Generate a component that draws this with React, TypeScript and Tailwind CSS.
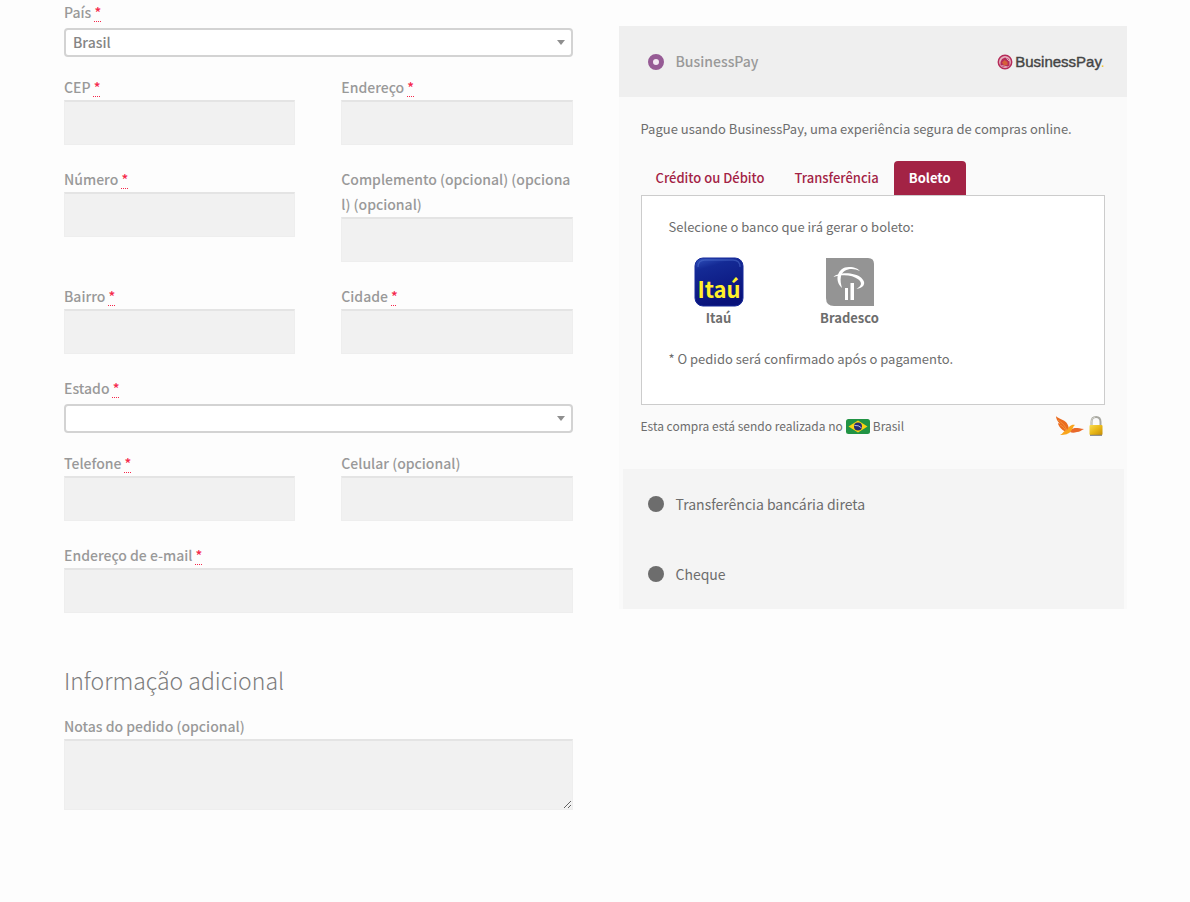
import type { ReactNode } from "react";

function Required() {
  return (
    <span className="text-[#f5284b] underline decoration-[#f5284b] decoration-dotted decoration-1 underline-offset-3">
      *
    </span>
  );
}

type FieldProps = { id: string; label: string; required?: boolean };

function Label({ id, label, required }: FieldProps) {
  return (
    <label htmlFor={id} className="block pr-0.5 text-[14px] leading-[25px] font-medium break-all text-[#999999]">
      {label} {required && <Required />}
    </label>
  );
}

function TextField(props: FieldProps) {
  return (
    <div className="mb-[22px]">
      <Label {...props} />
      <input
        id={props.id}
        type="text"
        required={props.required}
        className="block h-[45px] w-full border border-[#eeeeee] border-t-2 border-t-[#e4e4e4] bg-[#f1f1f1] px-3 text-[14px] text-[#929292] outline-none"
      />
    </div>
  );
}

function SelectField({ options, ...props }: FieldProps & { options: string[] }) {
  return (
    <div className="mb-[18px]">
      <Label {...props} />
      <div className="relative mt-[3px]">
        <select
          id={props.id}
          className="block h-[29px] w-full appearance-none rounded-[4px] border-2 border-[#d3d3d3] bg-white pr-6 pl-[7px] text-[14px] leading-[25px] font-medium text-[#858585] outline-none"
        >
          {options.map((o) => (
            <option key={o}>{o}</option>
          ))}
        </select>
        <svg viewBox="0 0 8 5" className="pointer-events-none absolute top-3 right-2 h-[5px] w-2" aria-hidden="true">
          <path d="M0 0h8L4 5z" fill="#8f8f8f" />
        </svg>
      </div>
    </div>
  );
}

function Row({ children }: { children: ReactNode }) {
  return <div className="grid grid-cols-2 gap-x-[46px]">{children}</div>;
}

function PayLogo() {
  return (
    <span className="flex items-center gap-0.5" role="img" aria-label="BusinessPay">
      <svg viewBox="0 0 16 16" className="h-4 w-4">
        <circle cx="8" cy="8" r="6.7" fill="#e6b3c0" stroke="#b62b59" strokeWidth="1.5" />
        <path d="M3.500 8 5 5l3-1.500L11.500 5l1 3v3.500L9.500 13H6l-2.500-2z" fill="#b62b59" />
        <path d="M5 8.500 7.500 6l3 2v3L7 11.500z" fill="#d5603a" />
        <path d="m4.500 11.500 5.500 1.300M9.500 4.500 12 7" stroke="#e8c7d0" strokeWidth=".8" />
      </svg>
      <span className="font-['Liberation_Sans',sans-serif] text-[15px] leading-5">
        <span className="text-[#444444] [-webkit-text-stroke:0.4px_#444444]">BusinessPay</span>
        <span className="text-[#f3c62c]">.</span>
      </span>
    </span>
  );
}

function ItauLogo() {
  return (
    <svg viewBox="0 0 50 50" className="h-[50px] w-[50px]" aria-hidden="true">
      <defs>
        <linearGradient id="itau" x1="0" y1="0" x2=".3" y2="1">
          <stop offset="0" stopColor="#3153bd" />
          <stop offset=".25" stopColor="#142a95" />
          <stop offset="1" stopColor="#09127a" />
        </linearGradient>
      </defs>
      <rect x="1" y="1" width="48" height="48" rx="8" fill="url(#itau)" stroke="#16299a" />
      <path d="M4 10q0-7 7-7h28q7 0 7 7" fill="none" stroke="#4f70cd" strokeWidth="1.300" opacity=".5" />
      <text x="25" y="41" textAnchor="middle" fontFamily="Noto Sans CJK SC, sans-serif" fontWeight="700" fontSize="22" fill="#fff02a">
        Itaú
      </text>
    </svg>
  );
}

function BradescoLogo() {
  return (
    <svg viewBox="0 0 50 50" className="h-[50px] w-[50px]" aria-hidden="true">
      <path d="M1 1h42q6 0 6 6v42H9q-8 0-8-8z" fill="#949494" />
      <path d="M8.500 20c5-5 21-5 28 1 6 6 1 10-5 11 5-3 6-6 2-9.500-6-5-17-5.500-25-2.500z" fill="#fff" />
      <path d="M17 31C9 24 12 10 24 10c6 0 9 2 11 4-8-4-17-2-19 5-1 5 0 8 1 12z" fill="#fff" />
      <path d="M20 31h3v12h-3zM25.500 26H29v17h-3.500z" fill="#fff" />
    </svg>
  );
}

function BrazilFlag() {
  return (
    <svg viewBox="0 0 24 15" className="mx-[3px] inline-block h-[15px] w-6 align-[-3px]" aria-hidden="true">
      <rect width="24" height="15" rx="2.500" fill="#219344" />
      <path d="M2.500 7.500 12 1.500l9.500 6-9.500 6z" fill="#f8d313" />
      <circle cx="12" cy="7.500" r="4" fill="#262a72" />
      <path d="M8.500 6.500q4-.6 7 2.300" fill="none" stroke="#c9cce4" strokeWidth=".9" />
    </svg>
  );
}

function BirdIcon() {
  return (
    <svg viewBox="0 0 30 20" className="h-5 w-[30px]" aria-hidden="true">
      <path d="M1 0c3 4 12 3 13 13l-3 3C6 14 3 9 3 7l2 1C2 5 1 2 1 0z" fill="#ea6c1f" />
      <path d="M3 4c4 3 7 5 9 11M5 9c3 1 5 4 6 6" stroke="#f7a04b" strokeWidth=".7" fill="none" />
      <path d="M16 14c3-3 6-2 13-1-3 1-4 3-7 3-3 1-5 1-7 0z" fill="#e9682a" />
      <path d="M5 19c3-1 3-4 7-5 2-3 4-6 8-5-2 1-2 4-4 6-2 3-6 4-11 4z" fill="#f9a51d" />
    </svg>
  );
}

function LockIcon() {
  return (
    <svg viewBox="0 0 14 20" className="h-5 w-[14px]" aria-hidden="true">
      <defs>
        <linearGradient id="lock" x1="0" y1="0" x2="1" y2="1">
          <stop offset="0" stopColor="#f9dc52" />
          <stop offset=".5" stopColor="#e9b818" />
          <stop offset="1" stopColor="#c58d08" />
        </linearGradient>
      </defs>
      <path d="M2.500 10V6q0-5 4.500-5t4.500 5v4" fill="none" stroke="#a7a7a0" strokeWidth="2" />
      <path d="M2.300 10V6q0-4.500 4-5" fill="none" stroke="#deded6" strokeWidth=".8" />
      <rect x=".5" y="9" width="13" height="10" rx="1" fill="url(#lock)" />
      <path d="M1 19.300h12" stroke="#777" />
    </svg>
  );
}

const radioBase = "m-0 h-4 w-4 shrink-0 appearance-none rounded-full";

function Tab({ children, active }: { children: ReactNode; active?: boolean }) {
  return (
    <button
      type="button"
      role="tab"
      aria-selected={!!active}
      className={
        active
          ? "h-[34px] rounded-t-[4px] bg-[#a32345] px-[15px] text-[13px] font-bold text-white"
          : "h-[34px] px-[15px] text-[13px] font-medium text-[#a32345]"
      }
    >
      {children}
    </button>
  );
}

function Bank({ name, children }: { name: string; children: ReactNode }) {
  return (
    <button type="button" className="flex w-[100px] flex-col items-center text-[13px] leading-[22px] font-bold text-[#6d6d6d]">
      {children}
      {name}
    </button>
  );
}

export default function App() {
  return (
    <div className="min-h-screen bg-[#fdfdfd] pr-[63px] pb-20 pl-16 font-['Noto_Sans_CJK_SC',sans-serif]">
      <form className="grid grid-cols-2 items-start gap-x-[46px]" onSubmit={(e) => e.preventDefault()}>
        <section>
          <SelectField id="pais" label="País" required options={["Brasil"]} />
          <Row>
            <TextField id="cep" label="CEP" required />
            <TextField id="endereco" label="Endereço" required />
            <TextField id="numero" label="Número" required />
            <TextField id="complemento" label="Complemento (opcional) (opcional) (opcional)" />
            <TextField id="bairro" label="Bairro" required />
            <TextField id="cidade" label="Cidade" required />
          </Row>
          <SelectField id="estado" label="Estado" required options={[""]} />
          <Row>
            <TextField id="telefone" label="Telefone" required />
            <TextField id="celular" label="Celular (opcional)" />
          </Row>
          <TextField id="email" label="Endereço de e-mail" required />

          <h3 className="mt-[51px] mb-[18px] text-[23px] leading-8 font-light text-[#7d7d7d]">Informação adicional</h3>
          <Label id="notas" label="Notas do pedido (opcional)" />
          <textarea
            id="notas"
            className="block h-[71px] w-full resize-y border border-[#eeeeee] border-t-2 border-t-[#e4e4e4] bg-[#f1f1f1] p-3 text-[14px] text-[#929292] outline-none"
          />
        </section>

        <section className="mt-[26px] bg-[#fafafa] text-[#6d6d6d]">
          <div className="flex h-[71px] items-center justify-between bg-[#efefef] pr-[22px] pl-[29px]">
            <label className="flex items-center gap-3 text-[14px] font-medium text-[#999999]">
              <input
                type="radio"
                name="pagamento"
                defaultChecked
                className={`${radioBase} border-[5px] border-[#965b95] bg-[#f3e9f3]`}
              />
              BusinessPay
            </label>
            <PayLogo />
          </div>

          <div className="px-[22px] pt-[21px] pb-8 text-[13px]">
            <p className="leading-[22px]">Pague usando BusinessPay, uma experiência segura de compras online.</p>
            <div role="tablist" className="mt-[21px] flex">
              <Tab>Crédito ou Débito</Tab>
              <Tab>Transferência</Tab>
              <Tab active>Boleto</Tab>
            </div>
            <div role="tabpanel" className="border border-[#cccccc] bg-white px-[27px] pt-5 pb-[34px] leading-[22px]">
              <p>Selecione o banco que irá gerar o boleto:</p>
              <div className="mt-[19px] flex gap-[31px]">
                <Bank name="Itaú">
                  <ItauLogo />
                </Bank>
                <Bank name="Bradesco">
                  <BradescoLogo />
                </Bank>
              </div>
              <p className="mt-[19px]">* O pedido será confirmado após o pagamento.</p>
            </div>
            <div className="mt-2.5 flex items-center justify-between pr-0.5">
              <p className="text-[12px] leading-[22px]">
                Esta compra está sendo realizada no
                <BrazilFlag />
                Brasil
              </p>
              <span className="flex items-center gap-1">
                <BirdIcon />
                <LockIcon />
              </span>
            </div>
          </div>

          <div className="mr-[3px] ml-1 bg-[#f4f4f4] text-[14px]">
            {["Transferência bancária direta", "Cheque"].map((name) => (
              <label key={name} className="flex h-[70px] items-center gap-3 pl-[25px]">
                <input type="radio" name="pagamento" className={`${radioBase} bg-[#6d6d6d]`} />
                {name}
              </label>
            ))}
          </div>
        </section>
      </form>
    </div>
  );
}
